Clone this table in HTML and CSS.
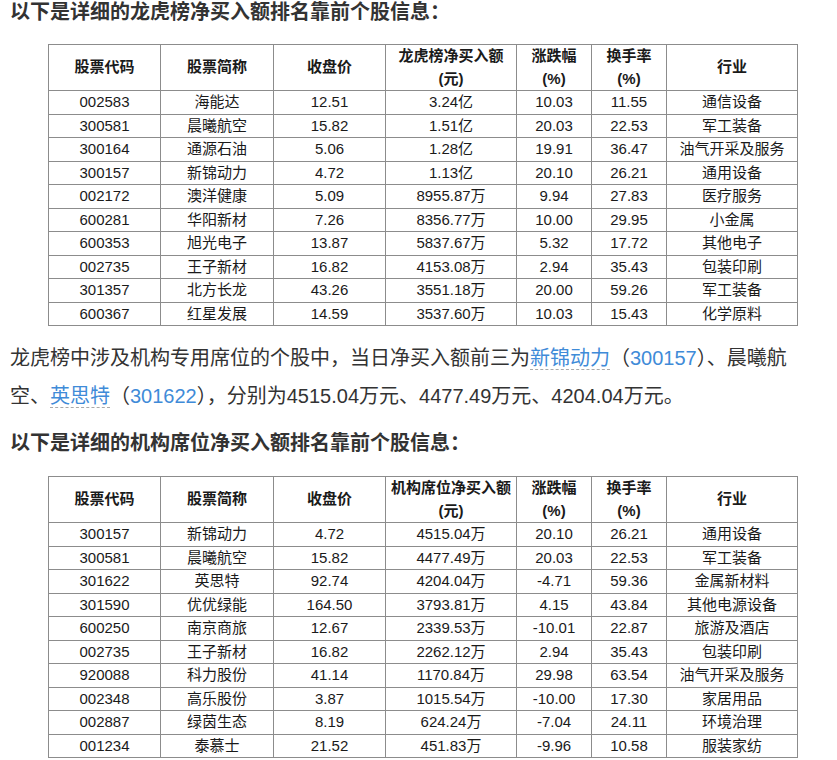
FILE: index.html
```html
<!DOCTYPE html>
<html lang="zh-CN">
<head>
<meta charset="utf-8">
<title>龙虎榜</title>
<link rel="stylesheet" href="styles.css">
</head>
<body>
<div class="page">
  <h2 class="title">以下是详细的龙虎榜净买入额排名靠前个股信息：</h2>
  <table class="stock-table first">
    <thead>
      <tr>
        <th class="c-code">股票代码</th>
        <th class="c-name">股票简称</th>
        <th class="c-price">收盘价</th>
        <th class="c-amount">龙虎榜净买入额<br>(元)</th>
        <th class="c-pct">涨跌幅<br>(%)</th>
        <th class="c-pct">换手率<br>(%)</th>
        <th class="c-ind">行业</th>
      </tr>
    </thead>
    <tbody>
      <tr><td>002583</td><td>海能达</td><td>12.51</td><td>3.24亿</td><td>10.03</td><td>11.55</td><td>通信设备</td></tr>
      <tr><td>300581</td><td>晨曦航空</td><td>15.82</td><td>1.51亿</td><td>20.03</td><td>22.53</td><td>军工装备</td></tr>
      <tr><td>300164</td><td>通源石油</td><td>5.06</td><td>1.28亿</td><td>19.91</td><td>36.47</td><td>油气开采及服务</td></tr>
      <tr><td>300157</td><td>新锦动力</td><td>4.72</td><td>1.13亿</td><td>20.10</td><td>26.21</td><td>通用设备</td></tr>
      <tr><td>002172</td><td>澳洋健康</td><td>5.09</td><td>8955.87万</td><td>9.94</td><td>27.83</td><td>医疗服务</td></tr>
      <tr><td>600281</td><td>华阳新材</td><td>7.26</td><td>8356.77万</td><td>10.00</td><td>29.95</td><td>小金属</td></tr>
      <tr><td>600353</td><td>旭光电子</td><td>13.87</td><td>5837.67万</td><td>5.32</td><td>17.72</td><td>其他电子</td></tr>
      <tr><td>002735</td><td>王子新材</td><td>16.82</td><td>4153.08万</td><td>2.94</td><td>35.43</td><td>包装印刷</td></tr>
      <tr><td>301357</td><td>北方长龙</td><td>43.26</td><td>3551.18万</td><td>20.00</td><td>59.26</td><td>军工装备</td></tr>
      <tr><td>600367</td><td>红星发展</td><td>14.59</td><td>3537.60万</td><td>10.03</td><td>15.43</td><td>化学原料</td></tr>
    </tbody>
  </table>

  <p class="summary">龙虎榜中涉及机构专用席位的个股中，当日净买入额前三为<a class="stock-link" href="#">新锦动力</a>（<span class="code">300157</span>）、晨曦航空、<a class="stock-link" href="#">英思特</a>（<span class="code">301622</span>），分别为4515.04万元、4477.49万元、4204.04万元。</p>

  <h2 class="title second">以下是详细的机构席位净买入额排名靠前个股信息：</h2>
  <table class="stock-table">
    <thead>
      <tr>
        <th class="c-code">股票代码</th>
        <th class="c-name">股票简称</th>
        <th class="c-price">收盘价</th>
        <th class="c-amount">机构席位净买入额<br>(元)</th>
        <th class="c-pct">涨跌幅<br>(%)</th>
        <th class="c-pct">换手率<br>(%)</th>
        <th class="c-ind">行业</th>
      </tr>
    </thead>
    <tbody>
      <tr><td>300157</td><td>新锦动力</td><td>4.72</td><td>4515.04万</td><td>20.10</td><td>26.21</td><td>通用设备</td></tr>
      <tr><td>300581</td><td>晨曦航空</td><td>15.82</td><td>4477.49万</td><td>20.03</td><td>22.53</td><td>军工装备</td></tr>
      <tr><td>301622</td><td>英思特</td><td>92.74</td><td>4204.04万</td><td>-4.71</td><td>59.36</td><td>金属新材料</td></tr>
      <tr><td>301590</td><td>优优绿能</td><td>164.50</td><td>3793.81万</td><td>4.15</td><td>43.84</td><td>其他电源设备</td></tr>
      <tr><td>600250</td><td>南京商旅</td><td>12.67</td><td>2339.53万</td><td>-10.01</td><td>22.87</td><td>旅游及酒店</td></tr>
      <tr><td>002735</td><td>王子新材</td><td>16.82</td><td>2262.12万</td><td>2.94</td><td>35.43</td><td>包装印刷</td></tr>
      <tr><td>920088</td><td>科力股份</td><td>41.14</td><td>1170.84万</td><td>29.98</td><td>63.54</td><td>油气开采及服务</td></tr>
      <tr><td>002348</td><td>高乐股份</td><td>3.87</td><td>1015.54万</td><td>-10.00</td><td>17.30</td><td>家居用品</td></tr>
      <tr><td>002887</td><td>绿茵生态</td><td>8.19</td><td>624.24万</td><td>-7.04</td><td>24.11</td><td>环境治理</td></tr>
      <tr><td>001234</td><td>泰慕士</td><td>21.52</td><td>451.83万</td><td>-9.96</td><td>10.58</td><td>服装家纺</td></tr>
    </tbody>
  </table>
</div>
</body>
</html>
```

FILE: styles.css
```css
html, body {
  margin: 0;
  padding: 0;
  background: #ffffff;
}

body {
  font-family: "Liberation Sans", "Noto Sans CJK SC", sans-serif;
  color: #333333;
}

.page {
  padding: 0 10px;
  width: 797px;
}

.title {
  margin: 0;
  font-size: 20px;
  line-height: 24px;
  font-weight: bold;
  color: #333333;
}

.title.second {
  margin-top: 16px;
}

.stock-table {
  border-collapse: collapse;
  table-layout: fixed;
  width: 750px;
  margin: 21px 0 0 38px;
  font-size: 15px;
  line-height: 22.5px;
  color: #1a1a1a;
}

.stock-table.first {
  margin-top: 20px;
}

.stock-table th,
.stock-table td {
  border: 1px solid #8c8c8c;
  padding: 0;
  text-align: center;
  vertical-align: middle;
  white-space: nowrap;
}

.stock-table th {
  font-weight: bold;
  color: #1a1a1a;
}

.c-code { width: 111px; }
.c-name { width: 112px; }
.c-price { width: 111px; }
.c-amount { width: 130px; }
.c-pct { width: 74px; }
.c-ind { width: 130px; }

.summary {
  margin: 13px 0 0 0;
  font-size: 20px;
  line-height: 38px;
  color: #333333;
}

.stock-link {
  color: #3f8bd8;
  text-decoration: none;
  border-bottom: 1px dashed #a9a9a9;
}

.code {
  color: #3f8bd8;
}
```
